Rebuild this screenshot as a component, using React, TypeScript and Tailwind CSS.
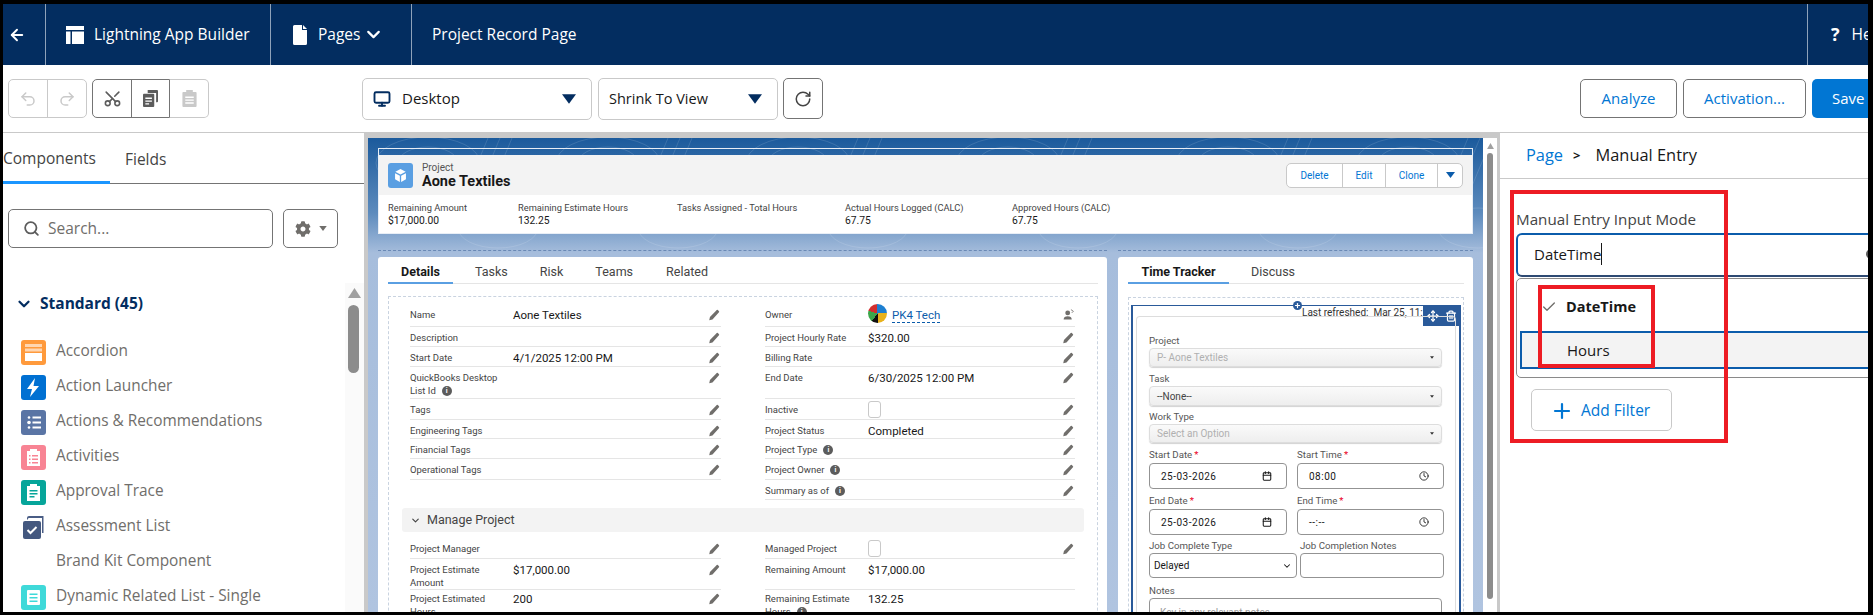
import { ArrowLeft, ChevronDown, Undo2, Redo2, Scissors, Monitor, RotateCw, Search, Plus, Move, Trash2, Clock, Calendar, Check } from "lucide-react";
import { FaCog } from "react-icons/fa";

const Tri = ({ className }: { className: string }) => (
  <svg viewBox="0 0 12 8" className={className}><path d="M0 0h12L6 8z" fill="currentColor" /></svg>
);

const Pencil = () => (
  <svg viewBox="0 0 16 16" className="w-[13px] h-[13px] text-[#706e6b] shrink-0">
    <path d="M1.5 15l.9-4L10.8 2.600a1 1 0 011.400 0l1.300 1.300a1 1 0 010 1.400L5.500 14z" fill="currentColor" />
  </svg>
);

const Info = () => (
  <span className="inline-flex ml-[6px] w-[10px] h-[10px] rounded-full bg-[#5c5c5c] text-white text-[7px] leading-[10px] justify-center font-bold align-middle">i</span>
);

type Field = { label: string; value?: string; info?: boolean; check?: boolean; owner?: boolean; noEdit?: boolean };
type Row = { h: string; pt: string; left?: Field; right?: Field };

const topRows: Row[] = [
  { h: "h-[27px]", pt: "pt-[8px]", left: { label: "Name", value: "Aone Textiles" }, right: { label: "Owner", owner: true } },
  { h: "h-[20px]", pt: "pt-[4px]", left: { label: "Description" }, right: { label: "Project Hourly Rate", value: "$320.00" } },
  { h: "h-[20px]", pt: "pt-[4px]", left: { label: "Start Date", value: "4/1/2025 12:00 PM" }, right: { label: "Billing Rate" } },
  { h: "h-[32px]", pt: "pt-[4px]", left: { label: "QuickBooks Desktop List Id", info: true }, right: { label: "End Date", value: "6/30/2025 12:00 PM" } },
  { h: "h-[21px]", pt: "pt-[4px]", left: { label: "Tags" }, right: { label: "Inactive", check: true } },
  { h: "h-[19px]", pt: "pt-[4px]", left: { label: "Engineering Tags" }, right: { label: "Project Status", value: "Completed" } },
  { h: "h-[20px]", pt: "pt-[4px]", left: { label: "Financial Tags" }, right: { label: "Project Type", info: true } },
  { h: "h-[21px]", pt: "pt-[4px]", left: { label: "Operational Tags" }, right: { label: "Project Owner", info: true } },
  { h: "h-[20px]", pt: "pt-[4px]", right: { label: "Summary as of", info: true } },
];

const manageRows: Row[] = [
  { h: "h-[27px]", pt: "pt-[10px]", left: { label: "Project Manager" }, right: { label: "Managed Project", check: true } },
  { h: "h-[29px]", pt: "pt-[4px]", left: { label: "Project Estimate Amount", value: "$17,000.00" }, right: { label: "Remaining Amount", value: "$17,000.00", noEdit: true } },
  { h: "h-[29px]", pt: "pt-[4px]", left: { label: "Project Estimated Hours", value: "200" }, right: { label: "Remaining Estimate Hours", value: "132.25", info: true, noEdit: true } },
];

const FieldCell = ({ f, pt }: { f?: Field; pt: string }) => {
  if (!f) return <div />;
  return (
    <div className={`flex items-start border-b border-[#e5e5e5] h-full min-w-0 ${pt}`}>
      <div className="w-[103px] shrink-0 pr-[12px] text-[9.500px] leading-[13px] text-[#444444]">
        {f.label}
        {f.info && <Info />}
      </div>
      <div className="flex-1 text-[11.500px] leading-[14px] text-[#181818] flex items-center gap-[5px]">
        {f.value}
        {f.check && <span className="w-[13px] h-[17px] border border-[#c9c9c9] rounded-[3px] bg-white -mt-[2px]" />}
        {f.owner && (
          <>
            <span className="w-[19px] h-[19px] rounded-full bg-[conic-gradient(#1d7fd1_0_25%,#e8b21c_25%_50%,#111111_50%_60%,#3ca64a_60%_80%,#d32f2f_80%_100%)] -mt-[4px]" />
            <span className="text-[#0b5cab] border-b border-dashed border-[#0b5cab] leading-[13px]">PK4 Tech</span>
          </>
        )}
      </div>
      {f.owner ? (
        <svg viewBox="0 0 16 16" className="w-[13px] h-[13px] text-[#706e6b]"><circle cx="7" cy="6" r="3" fill="currentColor" /><path d="M2 14c0-3 2-4 5-4s5 1 5 4z" fill="currentColor" /><path d="M11 2l3 2-2 2" stroke="currentColor" fill="none" /></svg>
      ) : f.noEdit ? null : (
        <Pencil />
      )}
    </div>
  );
};

const Rows = ({ rows }: { rows: Row[] }) => (
  <div className="flex flex-col">
    {rows.map((r, i) => (
      <div key={i} className={`grid grid-cols-[311px_310px] gap-x-[44px] ${r.h}`}>
        <FieldCell f={r.left} pt={r.pt} />
        <FieldCell f={r.right} pt={r.pt} />
      </div>
    ))}
  </div>
);

const highlights = [
  { label: "Remaining Amount", value: "$17,000.00", w: "w-[130px]" },
  { label: "Remaining Estimate Hours", value: "132.25", w: "w-[159px]" },
  { label: "Tasks Assigned - Total Hours", value: "", w: "w-[168px]" },
  { label: "Actual Hours Logged (CALC)", value: "67.75", w: "w-[167px]" },
  { label: "Approved Hours (CALC)", value: "67.75", w: "w-[160px]" },
];

const ListIcon = ({ bg, children }: { bg: string; children?: React.ReactNode }) => (
  <span className={`block w-[25px] h-[25px] rounded-[3px] shrink-0 ${bg}`}>
    <svg viewBox="0 0 25 25" className="w-[25px] h-[25px]" fill="white">{children}</svg>
  </span>
);

const components: { name: string; icon?: React.ReactNode }[] = [
  { name: "Accordion", icon: <ListIcon bg="bg-[#ff9a3c]"><rect x="4" y="4" width="17" height="3" opacity=".6" /><rect x="4" y="8.500" width="17" height="3" opacity=".6" /><rect x="4" y="13" width="17" height="8" /></ListIcon> },
  { name: "Action Launcher", icon: <ListIcon bg="bg-[#0070d2]"><path d="M14 3L6 14h5l-2 8 9-11h-5.500z" /></ListIcon> },
  { name: "Actions & Recommendations", icon: <ListIcon bg="bg-[#5a75a5]"><circle cx="8" cy="7.500" r="1.300" /><circle cx="8" cy="12.500" r="1.800" /><circle cx="8" cy="17.500" r="1.300" /><rect x="11.500" y="6.500" width="8.500" height="2" /><rect x="11.500" y="11.500" width="8.500" height="2" /><rect x="11.500" y="16.500" width="8.500" height="2" /></ListIcon> },
  { name: "Activities", icon: <ListIcon bg="bg-[#f88494]"><path d="M6 6h3V4h7v2h3v15H6z" /><path d="M8 10h1.500v1.500H8zM11 10h6v1.500h-6zM8 13.500h1.500V15H8zM11 13.500h6V15h-6zM8 17h1.500v1.500H8zM11 17h6v1.500h-6z" fill="#f88494" /></ListIcon> },
  { name: "Approval Trace", icon: <ListIcon bg="bg-[#06a59a]"><path d="M6 6h3V4h7v2h3v15H6z" /><path d="M8.500 10h8v1.500h-8zM8.500 13h8v1.500h-8zM8.500 16h5v1.500h-5z" fill="#06a59a" /></ListIcon> },
  { name: "Assessment List", icon: (
    <svg viewBox="0 0 25 25" className="w-[25px] h-[25px] shrink-0">
      <path d="M6 4.500V3a2 2 0 012-2h14.500v17h-1.500V3H8a1 1 0 00-1 1v.500z" fill="#4a5d85" />
      <rect x="2" y="6" width="18" height="18" rx="2" fill="#44587f" />
      <path d="M6.500 15l3 3 6-6" stroke="white" strokeWidth="2" fill="none" />
    </svg>
  ) },
  { name: "Brand Kit Component" },
  { name: "Dynamic Related List - Single", icon: <ListIcon bg="bg-[#3fd9d9]"><rect x="6" y="5" width="13" height="15" rx="1" /><path d="M8.500 8.500h8V10h-8zM8.500 12h8v1.500h-8zM8.500 15.500h8V17h-8z" fill="#3fd9d9" /></ListIcon> },
];

const Label = ({ text, req }: { text: string; req?: boolean }) => (
  <div className="text-[9.700px] leading-[13px] text-[#555555]">
    {text}
    {req && <span className="text-[#ea001e] ml-[2px]">*</span>}
  </div>
);

const FakeSelect = ({ text, muted, h }: { text: string; muted?: boolean; h: string }) => (
  <div className={`${h} flex items-center justify-between px-[7px] rounded-[4px] border border-[#dddddd] bg-gradient-to-b from-[#fafafa] to-[#eeeeee] text-[10px] shadow-[0_1px_1px_rgba(0,0,0,0.18)] ${muted ? "text-[#b0b0b0]" : "text-[#444444]"}`}>
    <span>{text}</span>
    <Tri className="w-[4px] h-[3px] text-[#333333]" />
  </div>
);

const FakeInput = ({ text, icon }: { text: string; icon: "date" | "time" }) => (
  <div className="h-[26px] flex items-center justify-between pl-[11px] pr-[14px] rounded-[4px] border border-[#939393] text-[10px] tracking-[0.5px] text-[#181818] bg-white">
    <span>{text}</span>
    {icon === "date" ? <Calendar className="w-[10px] h-[10px]" strokeWidth={2.5} /> : <Clock className="w-[10px] h-[10px]" strokeWidth={2} />}
  </div>
);

const Topo = () => (
  <svg className="absolute inset-0 w-full h-full" fill="none" stroke="white" strokeOpacity="0.13" strokeWidth="1">
    {[60, 240, 430, 640, 860, 1040].map((x) => (
      <g key={x}>
        <ellipse cx={x} cy="25" rx="30" ry="16" />
        <ellipse cx={x} cy="25" rx="52" ry="26" />
        <ellipse cx={x + 70} cy="90" rx="40" ry="20" />
        <path d={`M${x + 60} 0l-25 60M${x + 72} 0l-25 60M${x + 84} 0l-25 60`} />
      </g>
    ))}
  </svg>
);

export default function App() {
  return (
    <div className="w-[1873px] h-[615px] bg-black pt-[4px] pl-[3px] pr-[5px] pb-[3px] overflow-hidden font-['Open_Sans',sans-serif]">
      <div className="h-full bg-white flex flex-col overflow-hidden">
        {/* header */}
        <div className="h-[61px] shrink-0 bg-[#032d60] text-white flex items-center text-[15.500px]">
          <div className="w-[43px] h-full flex items-center pl-[5px] border-r border-[#8fa2ba]">
            <ArrowLeft className="w-[18px] h-[18px]" strokeWidth={2.5} />
          </div>
          <div className="w-[225px] h-full flex items-center pl-[20px] gap-[10px] border-r border-[#8fa2ba]">
            <svg viewBox="0 0 18 18" className="w-[18px] h-[18px]" fill="white"><rect x="0" y="0" width="18" height="4" /><rect x="0" y="5.500" width="4.500" height="12.500" /><rect x="6" y="5.500" width="12" height="12.500" /></svg>
            <span>Lightning App Builder</span>
          </div>
          <div className="w-[141px] h-full flex items-center pl-[22px] gap-[11px] border-r border-[#8fa2ba]">
            <svg viewBox="0 0 14 20" className="w-[14px] h-[20px]" fill="white"><path d="M0 1.500A1.500 1.500 0 011.500 0H9v5h5v13.500a1.500 1.500 0 01-1.500 1.500h-11A1.500 1.500 0 010 18.500z" /><path d="M10 0l4 4h-4z" /></svg>
            <span>Pages</span>
            <ChevronDown className="w-[21px] h-[21px] -ml-[8px]" strokeWidth={2.5} />
          </div>
          <div className="flex-1 pl-[20px]">Project Record Page</div>
          <div className="w-[61px] h-full flex items-center pl-[23px] gap-[12px] border-l border-[#8fa2ba] overflow-hidden whitespace-nowrap">
            <span className="font-bold text-[18px]">?</span>
            <span>Help</span>
          </div>
        </div>

        {/* toolbar */}
        <div className="h-[68px] shrink-0 flex items-center border-b border-[#c9c9c9] pl-[5px]">
          <div className="flex h-[39px] border border-[#c9c9c9] rounded-[5px] w-[79px] text-[#c9c9c9]">
            <div className="w-[39px] border-r border-[#c9c9c9] flex items-center justify-center"><Undo2 className="w-[18px] h-[18px]" /></div>
            <div className="flex-1 flex items-center justify-center"><Redo2 className="w-[18px] h-[18px]" /></div>
          </div>
          <div className="flex h-[39px] ml-[5px]">
            <div className="flex border border-[#747474] rounded-l-[5px] w-[78px] text-[#5c5c5c]">
              <div className="w-[39px] border-r border-[#747474] flex items-center justify-center"><Scissors className="w-[19px] h-[19px] -rotate-90" /></div>
              <div className="flex-1 flex items-center justify-center">
                <svg viewBox="0 0 16 18" className="w-[15px] h-[17px]" fill="currentColor"><path d="M5 0h10a1 1 0 011 1v11a1 1 0 01-1 1h-1V3H5z" /><path d="M1 4h10a1 1 0 011 1v12a1 1 0 01-1 1H1a1 1 0 01-1-1V5a1 1 0 011-1z" /><path d="M2.500 8h7v1.500h-7zM2.500 11h7v1.500h-7zM2.500 14h4v1.500h-4z" fill="white" /></svg>
              </div>
            </div>
            <div className="w-[39px] border border-l-0 border-[#c9c9c9] rounded-r-[5px] flex items-center justify-center text-[#c9c9c9]">
              <svg viewBox="0 0 15 18" className="w-[15px] h-[17px]" fill="currentColor"><path d="M1 2h3V0h7v2h3a1 1 0 011 1v14a1 1 0 01-1 1H1a1 1 0 01-1-1V3a1 1 0 011-1z" /><path d="M3 7h9v1.500H3zM3 10h9v1.500H3zM3 13h9v1.500H3z" fill="white" /></svg>
            </div>
          </div>
          <div className="w-[230px] h-[42px] ml-[153px] border border-[#c9c9c9] rounded-[5px] flex items-center pl-[10px] pr-[15px] text-[15px] text-[#181818]">
            <Monitor className="w-[18px] h-[18px] text-[#032d60]" strokeWidth={2.5} />
            <span className="ml-[11px] flex-1">Desktop</span>
            <Tri className="w-[14px] h-[10px] text-[#032d60]" />
          </div>
          <div className="w-[180px] h-[42px] ml-[6px] border border-[#c9c9c9] rounded-[5px] flex items-center pl-[10px] pr-[15px] text-[14.500px] text-[#181818]">
            <span className="flex-1">Shrink To View</span>
            <Tri className="w-[14px] h-[10px] text-[#032d60]" />
          </div>
          <div className="w-[40px] h-[41px] ml-[5px] border border-[#747474] rounded-[5px] flex items-center justify-center text-[#444444]">
            <RotateCw className="w-[18px] h-[18px]" />
          </div>
          <div className="ml-auto flex items-center gap-[6px] pr-0">
            <div className="w-[97px] h-[39px] border border-[#747474] rounded-[5px] flex items-center justify-center text-[15px] text-[#0176d3]">Analyze</div>
            <div className="w-[123px] h-[39px] border border-[#747474] rounded-[5px] flex items-center justify-center text-[15px] text-[#0176d3]">Activation...</div>
            <div className="w-[56px] h-[39px] bg-[#0176d3] rounded-l-[5px] flex items-center pl-[20px] text-[15px] text-white overflow-hidden">Save</div>
          </div>
        </div>

        {/* body */}
        <div className="flex-1 min-h-0 flex">
          {/* components panel */}
          <div className="w-[361px] shrink-0 flex flex-col overflow-hidden">
            <div className="h-[51px] shrink-0 flex border-b border-[#747474] text-[15.500px] text-[#444444] pt-[4px]">
              <div className="w-[107px] border-b-[3px] border-[#1b96ff] -mb-px flex items-center">Components</div>
              <div className="ml-[15px] flex items-center">Fields</div>
            </div>
            <div className="flex mt-[25px] ml-[5px] gap-[10px] shrink-0">
              <div className="w-[265px] h-[39px] border border-[#747474] rounded-[5px] flex items-center pl-[14px] gap-[8px] text-[15.500px] text-[#706e6b]">
                <Search className="w-[17px] h-[17px] text-[#5c5c5c]" strokeWidth={2.5} />
                Search...
              </div>
              <div className="w-[55px] h-[39px] border border-[#747474] rounded-[5px] flex items-center pl-[11px] gap-[8px] text-[#706e6b]">
                <FaCog className="w-[16px] h-[16px]" />
                <Tri className="w-[8px] h-[5px]" />
              </div>
            </div>
            <div className="flex-1 min-h-0 flex mt-[35px]">
              <div className="flex-1 overflow-hidden pt-[9px]">
                <div className="flex items-center pl-[12px] gap-[7px] text-[15.500px] font-bold text-[#032d60] h-[24px]">
                  <ChevronDown className="w-[18px] h-[18px]" strokeWidth={3} />
                  Standard (45)
                </div>
                <div className="mt-[24px] flex flex-col pl-[18px]">
                  {components.map((c) => (
                    <div key={c.name} className="h-[35px] flex items-start shrink-0">
                      <span className="block w-[25px] h-[25px] shrink-0">{c.icon}</span>
                      <span className="ml-[10px] text-[15.400px] leading-[22px] text-[#706e6b] whitespace-nowrap">{c.name}</span>
                    </div>
                  ))}
                </div>
              </div>
              <div className="w-[19px] shrink-0 bg-[#fafafa] pl-[3px] pt-[5px]">
                <svg viewBox="0 0 13 10" className="w-[13px] h-[10px]"><path d="M6.500 0L13 10H0z" fill="#a0a0a0" /></svg>
                <div className="w-[11px] h-[68px] mt-[7px] rounded-full bg-[#8c8c8c]" />
              </div>
            </div>
          </div>

          {/* canvas */}
          <div className="w-[1136px] shrink-0 flex border-l-[4px] border-r-[3px] border-t-[5px] border-[#c9c9c9] overflow-hidden bg-white font-['Roboto',sans-serif]">
            <div className="relative w-[1115px] shrink-0 pl-[10px] pr-[10px] pt-[10px] overflow-hidden bg-[linear-gradient(180deg,#1b5a9c_0px,#5d8bbd_75px,#a6bddc_115px,#b0c4e0_100%)]">
              <Topo />
              <div className="relative h-[86px] border border-[#e8eef6] pt-[6px]">
                <div className="h-[40px] bg-[#f3f3f3] flex items-center pl-[9px] pr-[9px]">
                  <span className="w-[25px] h-[25px] rounded-[3px] bg-[#5a9fe2] flex items-center justify-center">
                    <svg viewBox="0 0 16 16" className="w-[15px] h-[15px]" fill="white"><path d="M8 1l5.500 3L8 7 2.500 4z" /><path d="M2.200 5.500L7.300 8.200V15L2.200 12zM13.800 5.500L8.700 8.200V15l5.100-3z" /></svg>
                  </span>
                  <div className="ml-[9px] flex-1">
                    <div className="text-[10px] leading-[13px] text-[#555555]">Project</div>
                    <div className="text-[14.500px] leading-[16px] font-bold text-[#181818]">Aone Textiles</div>
                  </div>
                  <div className="flex h-[25px] border border-[#c9c9c9] rounded-[5px] bg-white text-[10px] text-[#0176d3]">
                    <div className="w-[56px] border-r border-[#c9c9c9] flex items-center justify-center">Delete</div>
                    <div className="w-[43px] border-r border-[#c9c9c9] flex items-center justify-center">Edit</div>
                    <div className="w-[52px] border-r border-[#c9c9c9] flex items-center justify-center">Clone</div>
                    <div className="w-[24px] flex items-center justify-center"><Tri className="w-[9px] h-[6px] text-[#0b5cab]" /></div>
                  </div>
                </div>
                <div className="h-[38px] bg-white flex pl-[9px] pt-[6px]">
                  {highlights.map((h) => (
                    <div key={h.label} className={`${h.w} shrink-0`}>
                      <div className="text-[9.300px] leading-[13px] text-[#444444]">{h.label}</div>
                      <div className="text-[10.300px] leading-[14px] text-[#181818]">{h.value}</div>
                    </div>
                  ))}
                </div>
              </div>

              <div className="relative flex gap-[11px] mt-[16px] h-[400px]">
                {/* details column */}
                <div className="w-[729px] border-t border-dashed border-[#6a89b5] pt-[6px]">
                  <div className="h-full bg-white pl-[10px] pr-[9px] rounded-t-[3px]">
                    <div className="h-[27px] flex items-end border-b border-[#e5e5e5] text-[12.500px] text-[#444444]">
                      <div className="w-[65px] h-[27px] flex items-center justify-center font-bold text-[#181818] border-b-[2px] border-[#5a9fe2] -mb-px pt-[5px]">Details</div>
                      <div className="ml-[22px] h-[27px] flex items-center pt-[5px]">Tasks</div>
                      <div className="ml-[32px] h-[27px] flex items-center pt-[5px]">Risk</div>
                      <div className="ml-[32px] h-[27px] flex items-center pt-[5px]">Teams</div>
                      <div className="ml-[33px] h-[27px] flex items-center pt-[5px]">Related</div>
                    </div>
                    <div className="mt-[12px] border border-dashed border-[#c9d3e0] border-b-0 pl-[21px] pt-[3px] h-[400px]">
                      <Rows rows={topRows} />
                      <div className="h-[24px] mt-[8px] -ml-[8px] mr-[13px] bg-[#f3f3f3] rounded-[3px] flex items-center pl-[8px] gap-[6px] text-[12.500px] text-[#444444]">
                        <ChevronDown className="w-[11px] h-[11px]" strokeWidth={2.5} />
                        Manage Project
                      </div>
                      <Rows rows={manageRows} />
                    </div>
                  </div>
                </div>

                {/* tracker column */}
                <div className="w-[355px] border-t border-dashed border-[#6a89b5] pt-[6px]">
                  <div className="h-full bg-white pl-[10px] pr-[9px] rounded-t-[3px]">
                    <div className="h-[27px] flex items-end border-b border-[#e5e5e5] text-[12.500px] text-[#444444]">
                      <div className="w-[101px] h-[27px] flex items-center justify-center font-bold text-[#181818] border-b-[2px] border-[#5a9fe2] -mb-px pt-[5px]">Time Tracker</div>
                      <div className="ml-[22px] h-[27px] flex items-center pt-[5px]">Discuss</div>
                    </div>
                    <div className="mt-[13px] border border-dashed border-[#c9d3e0] border-b-0 px-[2px] pt-[7px] h-[400px]">
                      <div className="relative h-full border-2 border-b-0 border-[#2a5a9a] border-t-[1.500px] px-[3px] pt-[10px]">
                        <span className="absolute -top-[5px] left-[160px] w-[9px] h-[9px] rounded-full bg-[#2a5a9a] text-white flex items-center justify-center"><Plus className="w-[7px] h-[7px]" strokeWidth={4} /></span>
                        <span className="absolute top-0 left-[169px] text-[10px] leading-[13px] text-[#333333] whitespace-nowrap">Last refreshed:&nbsp; Mar 25, 11:15 AM</span>
                        <div className="absolute -top-[1px] -right-[2px] w-[38px] h-[21px] bg-[#2a5a9a] text-white flex items-center justify-center gap-[6px]">
                          <Move className="w-[12px] h-[12px]" strokeWidth={2.5} />
                          <Trash2 className="w-[12px] h-[12px]" strokeWidth={2.5} />
                        </div>
                        <div className="relative h-full border border-b-0 border-[#dddddd] rounded-t-[4px] pl-[12px] pr-[13px] pt-[17px]">
                          <Label text="Project" />
                          <div className="mt-[1px]"><FakeSelect text="P- Aone Textiles" muted h="h-[19px]" /></div>
                          <div className="mt-[5px]"><Label text="Task" /></div>
                          <div className="mt-[1px]"><FakeSelect text="--None--" h="h-[20px]" /></div>
                          <div className="mt-[4px]"><Label text="Work Type" /></div>
                          <div className="mt-[1px]"><FakeSelect text="Select an Option" muted h="h-[19px]" /></div>
                          <div className="grid grid-cols-[138px_147px] gap-x-[10px] mt-[5px]">
                            <div><Label text="Start Date" req /><div className="mt-[2px]"><FakeInput text="25-03-2026" icon="date" /></div></div>
                            <div><Label text="Start Time" req /><div className="mt-[2px]"><FakeInput text="08:00" icon="time" /></div></div>
                          </div>
                          <div className="grid grid-cols-[138px_147px] gap-x-[10px] mt-[5px]">
                            <div><Label text="End Date" req /><div className="mt-[2px]"><FakeInput text="25-03-2026" icon="date" /></div></div>
                            <div><Label text="End Time" req /><div className="mt-[2px]"><FakeInput text="--:--" icon="time" /></div></div>
                          </div>
                          <div className="grid grid-cols-[148px_144px] gap-x-[3px] mt-[4px]">
                            <div>
                              <Label text="Job Complete Type" />
                              <div className="mt-[1px] h-[25px] flex items-center justify-between px-[4px] border border-[#939393] rounded-[4px] text-[10px] text-[#181818]">
                                Delayed
                                <ChevronDown className="w-[10px] h-[10px]" strokeWidth={2.5} />
                              </div>
                            </div>
                            <div>
                              <Label text="Job Completion Notes" />
                              <div className="mt-[1px] h-[25px] border border-[#939393] rounded-[4px]" />
                            </div>
                          </div>
                          <div className="mt-[6px]"><Label text="Notes" /></div>
                          <div className="mt-[1px] h-[50px] border border-[#939393] rounded-[4px] px-[10px] pt-[6px] text-[10px] text-[#9a9a9a]">Key in any relevant notes</div>
                        </div>
                      </div>
                    </div>
                  </div>
                </div>
              </div>
            </div>
            <div className="flex-1 bg-white pl-[4px] pt-[5px]">
              <svg viewBox="0 0 8 7" className="w-[7px] h-[6px]"><path d="M4 0l4 7H0z" fill="#a0a0a0" /></svg>
              <div className="w-[6px] h-[446px] mt-[4px] rounded-full bg-[#8c8c8c]" />
            </div>
          </div>

          {/* properties panel */}
          <div className="flex-1 min-w-0 overflow-hidden">
            <div className="h-[46px] border-b border-[#c9c9c9] flex items-center pl-[26px] text-[16.400px] text-[#181818] whitespace-nowrap">
              <span className="text-[#0176d3]">Page</span>
              <span className="ml-[10px] font-bold text-[13px]">&gt;</span>
              <span className="ml-[15px]">Manual Entry</span>
            </div>
            <div className="relative pl-[16px] pt-[30px]">
              <div className="text-[15.200px] leading-[20px] text-[#444444] whitespace-nowrap">Manual Entry Input Mode</div>
              <div className="w-[360px] h-[44px] mt-[4px] flex items-center pl-[16px] pb-[2px] border-2 border-[#0b5cab] border-b-[#2e4a73] rounded-l-[6px] text-[15px] text-[#181818]">
                DateTime<span className="w-px h-[22px] bg-[#181818]" />
                <span className="ml-auto -mr-[2px] w-[10px] h-[10px] rounded-full border-2 border-[#5c5c5c]" />
              </div>
              <div className="w-[360px] h-[100px] mt-[1px] border border-[#8a8a8a] rounded-l-[5px] pl-[3px] pt-[9px]">
                <div className="h-[43px] flex items-center text-[14.500px] font-bold text-[#181818] pl-[21px] pb-[5px]">
                  <Check className="w-[16px] h-[16px] text-[#706e6b]" />
                  <span className="ml-[9px]">DateTime</span>
                </div>
                <div className="h-[38px] bg-[#f3f3f3] border-2 border-[#0b5cab] flex items-center pl-[45px] pt-[1px] text-[15px] text-[#181818]">Hours</div>
              </div>
              <div className="w-[141px] h-[42px] ml-[15px] mt-[11px] border border-[#c9c9c9] rounded-[5px] flex items-center pl-[18px] pt-[1px] gap-[7px] text-[15.500px] text-[#0176d3]">
                <Plus className="w-[24px] h-[24px]" strokeWidth={2.2} />
                Add Filter
              </div>
              {/* annotation boxes drawn over the shot */}
              <div className="absolute left-[10px] top-[11px] w-[218px] h-[253px] border-[4.500px] border-[#ed1c24]" />
              <div className="absolute left-[38px] top-[106px] w-[117px] h-[83px] border-[4.500px] border-[#ed1c24]" />
            </div>
          </div>
        </div>
      </div>
    </div>
  );
}
